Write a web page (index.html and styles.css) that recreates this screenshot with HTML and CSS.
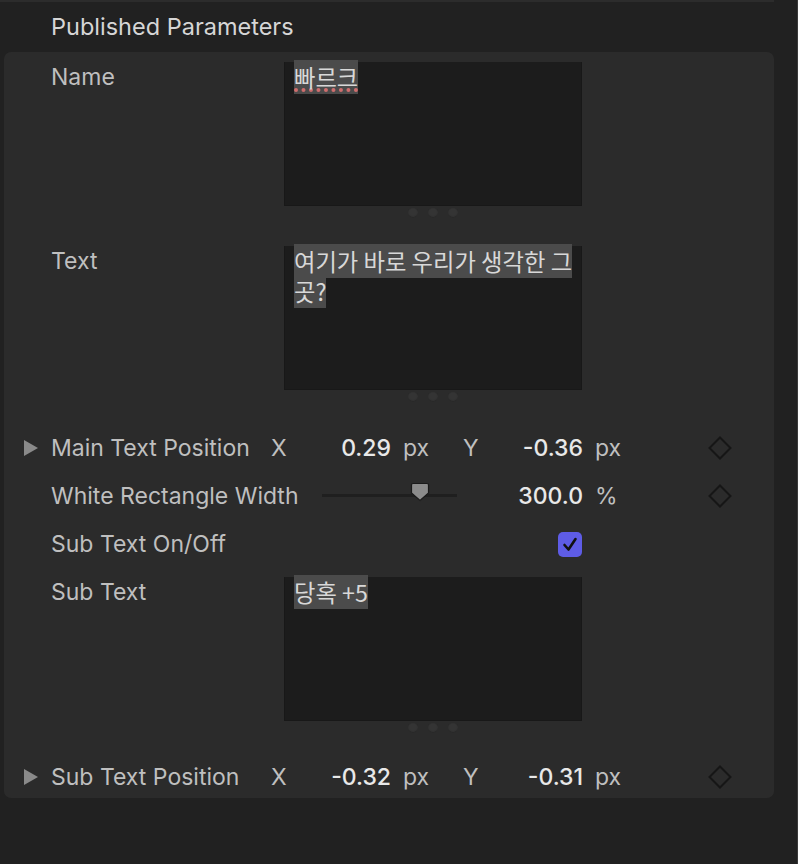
FILE: index.html
```html
<!DOCTYPE html>
<html>
<head>
<meta charset="utf-8">
<link rel="stylesheet" href="styles.css">
</head>
<body>
<div class="topline"></div>
<div class="title">Published Parameters</div>
<div class="panel">
  <div class="field">
    <div class="label">Name</div>
    <div class="boxwrap">
      <div class="box"><span class="sel spell">빠르크</span></div>
      <div class="dots"><i></i><i></i><i></i></div>
    </div>
  </div>
  <div class="field f2">
    <div class="label">Text</div>
    <div class="boxwrap">
      <div class="box"><span class="sel">여기가 바로 우리가 생각한 그 곳?</span></div>
      <div class="dots"><i></i><i></i><i></i></div>
    </div>
  </div>
  <div class="row r1">
    <div class="twisty"><svg width="14" height="16" viewBox="0 0 14 16"><polygon points="0,0 14,8 0,16" fill="#8a8a8a"/></svg></div>
    <div class="plabel">Main Text Position</div>
    <div class="axis">X</div>
    <div class="val">0.29</div>
    <div class="unit">px</div>
    <div class="axis">Y</div>
    <div class="val">-0.36</div>
    <div class="unit u2">px</div>
    <div class="kf"><svg width="24" height="24" viewBox="0 0 24 24"><polygon points="12,1.5 22.5,12 12,22.5 1.5,12" fill="none" stroke="#161616" stroke-width="2"/></svg></div>
  </div>
  <div class="row plain">
    <div class="wlabel">White Rectangle Width</div>
    <div class="slider"><div class="track"></div><svg class="thumb" width="20" height="20" viewBox="0 0 20 20"><path d="M3 1.5 H17 Q18.5 1.5 18.5 3 V11 L10 18.5 L1.5 11 V3 Q1.5 1.5 3 1.5 Z" fill="#8b8b8b" stroke="#1a1a1a" stroke-width="1.2"/></svg></div>
    <div class="val wide">300.0</div>
    <div class="unit u2">%</div>
    <div class="kf"><svg width="24" height="24" viewBox="0 0 24 24"><polygon points="12,1.5 22.5,12 12,22.5 1.5,12" fill="none" stroke="#161616" stroke-width="2"/></svg></div>
  </div>
  <div class="row plain">
    <div class="clabel">Sub Text On/Off</div>
    <div class="check"><svg width="24" height="25" viewBox="0 0 24 25"><path d="M6.5 13 L10.5 17.5 L17.5 7" fill="none" stroke="#111" stroke-width="2.6" stroke-linecap="round" stroke-linejoin="round"/></svg></div>
  </div>
  <div class="field f3">
    <div class="label">Sub Text</div>
    <div class="boxwrap">
      <div class="box"><span class="sel">당혹 +5</span></div>
      <div class="dots"><i></i><i></i><i></i></div>
    </div>
  </div>
  <div class="row r4">
    <div class="twisty"><svg width="14" height="16" viewBox="0 0 14 16"><polygon points="0,0 14,8 0,16" fill="#8a8a8a"/></svg></div>
    <div class="plabel">Sub Text Position</div>
    <div class="axis">X</div>
    <div class="val">-0.32</div>
    <div class="unit">px</div>
    <div class="axis">Y</div>
    <div class="val">-0.31</div>
    <div class="unit u2">px</div>
    <div class="kf"><svg width="24" height="24" viewBox="0 0 24 24"><polygon points="12,1.5 22.5,12 12,22.5 1.5,12" fill="none" stroke="#161616" stroke-width="2"/></svg></div>
  </div>
</div>
</body>
</html>
```
FILE: styles.css
```css
html, body {
  margin: 0;
  padding: 0;
}
body {
  width: 797px;
  height: 864px;
  background: #212121;
  border-right: 1px solid #3a3a3a;
  font-family: Inter, "Noto Sans", "Noto Sans CJK KR", sans-serif;
  color: #bfbfbf;
  overflow: hidden;
}
.topline {
  width: 774px;
  height: 2px;
  background: #2c2c2c;
}
.title {
  height: 50px;
  line-height: 50px;
  padding-left: 51px;
  font-size: 23.5px;
  font-weight: 400;
  color: #d6d6d6;
}
.panel {
  margin-left: 4px;
  width: 770px;
  height: 746px;
  background: #2b2b2b;
  border-radius: 7px;
  padding-top: 10px;
  box-sizing: border-box;
}
.field {
  display: flex;
  padding-left: 47px;
}
.f2 { margin-top: 26px; }
.f3 { margin-top: 9px; }
.label {
  width: 233px;
  font-size: 23px;
  line-height: 30px;
}
.boxwrap {
  width: 298px;
}
.box {
  height: 144px;
  box-sizing: border-box;
  background: #1c1c1c;
  border: 1px solid #181818;
  border-top: none;
  padding: 0 3px 0 9px;
  font-family: "Noto Sans CJK KR", sans-serif;
  font-size: 23.3px;
  line-height: 30px;
  color: #d8d8d8;
}
.sel {
  background: #4b4b4b;
}
.spell {
  text-decoration-line: underline;
  text-decoration-style: dotted;
  text-decoration-color: #cf6d6d;
  text-decoration-thickness: 4px;
  text-underline-offset: 1px;
}
.dots {
  height: 14px;
  display: flex;
  justify-content: center;
  align-items: center;
  gap: 10px;
}
.dots i {
  width: 10px;
  height: 10px;
  border-radius: 50%;
  background: #343434;
  box-shadow: inset 0 -1px 1px #272727;
}
.row {
  display: flex;
  align-items: center;
  height: 48px;
  font-size: 23px;
}
.r1 { margin-top: 20px; }
.r4 { margin-top: 21px; height: 42px; }
.plain { padding-left: 47px; }
.twisty {
  width: 27px;
  padding-left: 20px;
  display: flex;
  align-items: center;
}
.plabel { width: 220px; }
.axis { width: 40px; }
.val {
  width: 80px;
  text-align: right;
  color: #e8e8e8;
  font-weight: 500;
}
.val.wide { width: 126px; }
.unit {
  margin-left: 12px;
  width: 60px;
}
.unit.u2 { width: 113px; }
.kf {
  width: 24px;
  height: 24px;
  display: flex;
}
.wlabel { width: 271px; }
.slider {
  width: 135px;
  height: 20px;
  position: relative;
}
.track {
  position: absolute;
  left: 0;
  right: 0;
  top: 8px;
  height: 3px;
  background: #1f1f1f;
}
.thumb {
  position: absolute;
  left: 88px;
  top: -4px;
}
.clabel { width: 507px; }
.check {
  width: 24px;
  height: 25px;
  border-radius: 5px;
  background: #5e5ce6;
  display: flex;
}
```
